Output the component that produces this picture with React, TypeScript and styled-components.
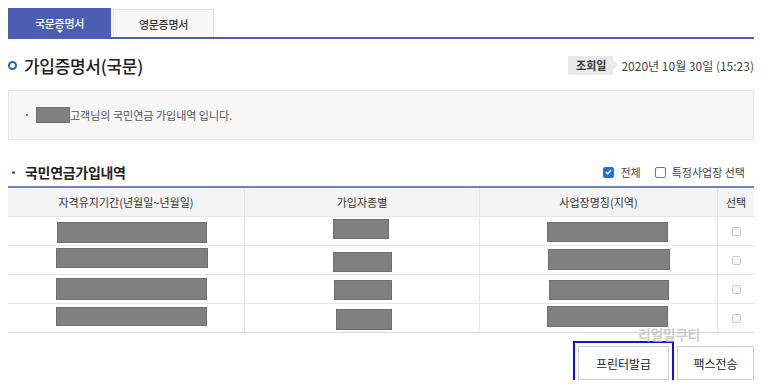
import { Fragment } from "react";
import styled, { createGlobalStyle } from "styled-components";

const GlobalStyle = createGlobalStyle`
  body {
    margin: 0;
    background: #fff;
    font-family: "Noto Sans CJK KR", "Noto Sans", sans-serif;
    color: #333;
  }
`;

const BLUE = "#4b5eb4";

const Page = styled.div`
  width: 746px;
  padding: 8px 8px 0;
  position: relative;
`;

const TabBar = styled.div`
  display: flex;
  gap: 2px;
  border-bottom: 2px solid ${BLUE};
`;

const Tab = styled.div<{ $active?: boolean }>`
  position: relative;
  width: ${(p) => (p.$active ? 101 : 99)}px;
  height: ${(p) => (p.$active ? 28 : 27)}px;
  margin-top: ${(p) => (p.$active ? 0 : 1)}px;
  display: flex;
  align-items: center;
  justify-content: center;
  font-size: 11px;
  font-weight: 500;
  letter-spacing: -0.3px;
  color: ${(p) => (p.$active ? "#fff" : "#333")};
  background: ${(p) => (p.$active ? BLUE : "#f7f7f7")};
  border: 1px solid ${(p) => (p.$active ? BLUE : "#e2e2e2")};
  border-bottom: none;
  box-sizing: content-box;
  &::after {
    content: "";
    display: ${(p) => (p.$active ? "block" : "none")};
    position: absolute;
    left: 50%;
    bottom: 4px;
    margin-left: -3px;
    border-left: 3px solid transparent;
    border-right: 3px solid transparent;
    border-top: 3px solid #fff;
  }
`;

const TitleRow = styled.div`
  display: flex;
  align-items: center;
  justify-content: space-between;
  height: 30px;
  margin-top: 11px;
`;

const Title = styled.h2`
  display: flex;
  align-items: center;
  gap: 7px;
  margin: 0;
  font-size: 17px;
  font-weight: 500;
  color: #222;
  letter-spacing: -0.3px;
`;

const Ring = styled.span`
  width: 5px;
  height: 5px;
  border: 2.5px solid #1a63b8;
  border-radius: 50%;
  margin-top: 1px;
`;

const DateBox = styled.div`
  display: flex;
  align-items: center;
  gap: 8px;
  font-size: 12px;
  color: #444;
`;

const DateLabel = styled.span`
  position: relative;
  background: #e9e9e9;
  padding: 1px 7px 2px 8px;
  font-size: 11px;
  font-weight: 700;
  color: #333;
  &::after {
    content: "";
    position: absolute;
    right: -5px;
    top: 50%;
    margin-top: -5px;
    border-top: 5px solid transparent;
    border-bottom: 5px solid transparent;
    border-left: 5px solid #e9e9e9;
  }
`;

const InfoBox = styled.div`
  margin-top: 10px;
  height: 48px;
  background: #f7f7f7;
  border: 1px solid #e6e6e6;
  display: flex;
  align-items: center;
  padding-left: 17px;
  font-size: 11px;
  color: #555;
`;

const Dot = styled.span`
  width: 2px;
  height: 2px;
  background: #666;
  border-radius: 50%;
  margin-right: 8px;
`;

const Masked = styled.span<{ $w: number; $h: number }>`
  display: inline-block;
  width: ${(p) => p.$w}px;
  height: ${(p) => p.$h}px;
  background: #808080;
  border: 1px solid #6f6f6f;
  box-sizing: border-box;
`;

const SectionRow = styled.div`
  display: flex;
  align-items: center;
  justify-content: space-between;
  margin-top: 18px;
  height: 28px;
`;

const SectionTitle = styled.h3`
  display: flex;
  align-items: center;
  margin: 0;
  font-size: 14px;
  font-weight: 700;
  color: #222;
  letter-spacing: -0.3px;
`;

const BlueDot = styled.span`
  width: 3px;
  height: 3px;
  border-radius: 50%;
  background: #3553b0;
  margin: 0 10px 0 4px;
`;

const Options = styled.div`
  display: flex;
  align-items: center;
  gap: 14px;
  font-size: 11px;
  color: #444;
  padding-right: 9px;
`;

const Option = styled.label`
  display: flex;
  align-items: center;
  gap: 6px;
`;

const Box = styled.span<{ $checked?: boolean }>`
  width: 9px;
  height: 9px;
  border-radius: 2px;
  display: flex;
  align-items: center;
  justify-content: center;
  background: ${(p) => (p.$checked ? "#1a73e8" : "#fff")};
  border: 1px solid ${(p) => (p.$checked ? "#1a73e8" : "#777")};
`;

const Table = styled.div`
  border-top: 2px solid #7081c6;
  border-bottom: 1px solid #d7d7d7;
  display: grid;
  grid-template-columns: 237px 235px 238px 36px;
`;

const HeadCell = styled.div<{ $last?: boolean }>`
  height: 28px;
  background: #f4f4f4;
  display: flex;
  align-items: center;
  justify-content: center;
  font-size: 11px;
  color: #333;
  border-right: ${(p) => (p.$last ? "none" : "1px solid #e3e3e3")};
`;

const Cell = styled.div<{ $last?: boolean }>`
  height: 28px;
  border-top: 1px solid #e6e6e6;
  display: flex;
  align-items: center;
  justify-content: center;
  border-right: ${(p) => (p.$last ? "none" : "1px solid #e3e3e3")};
`;

const SmallBox = styled.span`
  width: 7px;
  height: 7px;
  border: 1px solid #ccc;
  border-radius: 2px;
  background: #fafafa;
`;

const Buttons = styled.div`
  display: flex;
  justify-content: flex-end;
  gap: 4px;
  margin-top: 13px;
`;

const Button = styled.button<{ $focus?: boolean }>`
  height: 34px;
  padding: 0;
  width: ${(p) => (p.$focus ? 91 : 77)}px;
  background: #fff;
  border: 1px solid #cfcfcf;
  font-family: inherit;
  font-size: 12px;
  color: #222;
  outline: ${(p) => (p.$focus ? "2px solid #1010e0" : "none")};
  outline-offset: 3px;
  margin-right: ${(p) => (p.$focus ? 4 : 0)}px;
`;

const Watermark = styled.div`
  position: absolute;
  left: 638px;
  top: 324px;
  font-size: 14px;
  font-weight: 700;
  color: rgba(190, 190, 190, 0.75);
  letter-spacing: -0.5px;
`;

type Block = { w: number; h: number; dx: number; dy: number };

const rows: Block[][] = [
  [
    { w: 150, h: 21, dx: 6, dy: 1 },
    { w: 56, h: 20, dx: -1, dy: -2 },
    { w: 121, h: 20, dx: 9, dy: 1 },
  ],
  [
    { w: 152, h: 20, dx: 6, dy: -2 },
    { w: 59, h: 20, dx: 0, dy: 2 },
    { w: 122, h: 21, dx: 10, dy: -1 },
  ],
  [
    { w: 151, h: 22, dx: 5, dy: 0 },
    { w: 58, h: 20, dx: 1, dy: 1 },
    { w: 120, h: 20, dx: 10, dy: 1 },
  ],
  [
    { w: 151, h: 19, dx: 5, dy: -2 },
    { w: 56, h: 21, dx: 2, dy: 1 },
    { w: 121, h: 21, dx: 9, dy: -2 },
  ],
];

const headers = ["자격유지기간(년월일~년월일)", "가입자종별", "사업장명칭(지역)", "선택"];

export default function App() {
  return (
    <Page>
      <GlobalStyle />
      <TabBar>
        <Tab $active>국문증명서</Tab>
        <Tab>영문증명서</Tab>
      </TabBar>

      <TitleRow>
        <Title>
          <Ring />
          가입증명서(국문)
        </Title>
        <DateBox>
          <DateLabel>조회일</DateLabel>
          2020년 10월 30일 (15:23)
        </DateBox>
      </TitleRow>

      <InfoBox>
        <Dot />
        <Masked $w={34} $h={16} />
        고객님의 국민연금 가입내역 입니다.
      </InfoBox>

      <SectionRow>
        <SectionTitle>
          <BlueDot />
          국민연금가입내역
        </SectionTitle>
        <Options>
          <Option>
            <Box $checked>
              <svg width="7" height="6" viewBox="0 0 7 6">
                <path d="M1 3l1.8 1.8L6 1" stroke="#fff" strokeWidth="1.4" fill="none" />
              </svg>
            </Box>
            전체
          </Option>
          <Option>
            <Box />
            특정사업장 선택
          </Option>
        </Options>
      </SectionRow>

      <Table>
        {headers.map((h, i) => (
          <HeadCell key={h} $last={i === 3}>
            {h}
          </HeadCell>
        ))}
        {rows.map((row, r) => (
          <Fragment key={r}>
            {row.map((b, c) => (
              <Cell key={c}>
                <Masked
                  $w={b.w}
                  $h={b.h}
                  style={{ transform: `translate(${b.dx}px, ${b.dy}px)` }}
                />
              </Cell>
            ))}
            <Cell $last>
              <SmallBox />
            </Cell>
          </Fragment>
        ))}
      </Table>

      <Buttons>
        <Button $focus>프린터발급</Button>
        <Button>팩스전송</Button>
      </Buttons>

      <Watermark>리얼밀쿠티</Watermark>
    </Page>
  );
}
